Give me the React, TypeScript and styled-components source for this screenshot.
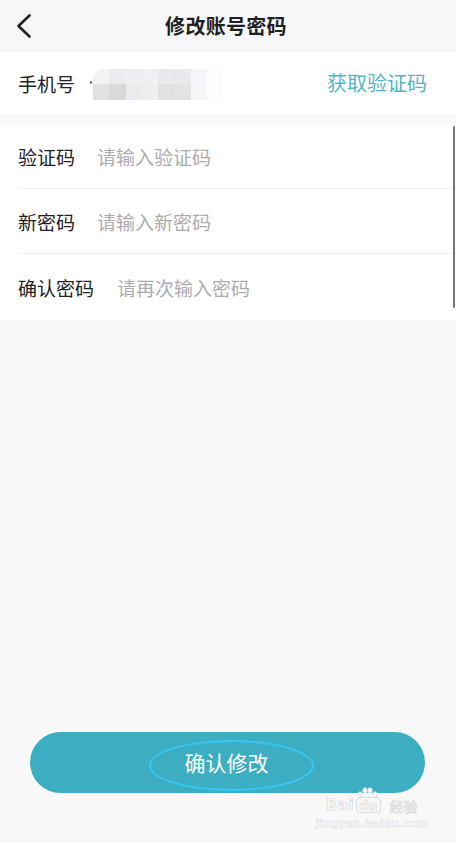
import React from "react";
import styled, { createGlobalStyle } from "styled-components";

const Global = createGlobalStyle`
  html, body { margin: 0; padding: 0; }
  body {
    background: #f8f8f9;
    font-family: "Noto Sans CJK SC", "Noto Sans", sans-serif;
    -webkit-font-smoothing: antialiased;
  }
`;

const Page = styled.div`
  min-height: 100vh;
  display: flex;
  flex-direction: column;
  position: relative;
  background: #f8f8f9;
`;

const Header = styled.header`
  height: 52px;
  display: grid;
  grid-template-columns: 1fr auto 1fr;
  align-items: center;
  background: #f7f7f9;
`;

const BackButton = styled.button`
  justify-self: start;
  border: 0;
  background: none;
  padding: 0 0 0 14px;
  height: 52px;
  display: flex;
  align-items: center;
  cursor: pointer;
`;

const Title = styled.h1`
  margin: 0;
  font-size: 20px;
  font-weight: 700;
  color: #1f1f24;
  letter-spacing: 0.3px;
  line-height: 1;
  transform: translateX(-2px);
`;

const PhoneRow = styled.div`
  height: 62px;
  background: #fff;
  display: flex;
  align-items: center;
  padding: 0 30px 0 18px;
`;

const Label = styled.span<{ $w?: number }>`
  font-size: 19px;
  color: #222228;
  width: ${(p) => p.$w ?? 79}px;
  flex-shrink: 0;
  line-height: 1;
`;

const Mosaic = styled.div`
  display: grid;
  grid-template-columns: repeat(8, 16.25px);
  grid-template-rows: 15px 16px;
  filter: blur(0.7px);
  margin-left: -4px;
  margin-top: 2px;
  position: relative;
`;

const Tick = styled.span`
  position: absolute;
  left: -3px;
  top: 12px;
  width: 2px;
  height: 3px;
  background: #666;
  border-radius: 1px;
`;

const Cell = styled.div<{ $c: string; $round?: boolean }>`
  background: ${(p) => p.$c};
  border-top-left-radius: ${(p) => (p.$round ? "11px" : "0")};
`;

const GetCode = styled.button`
  margin-left: auto;
  border: 0;
  background: none;
  padding: 0;
  font-family: inherit;
  font-size: 20px;
  color: #52b5c7;
  line-height: 1;
  cursor: pointer;
  transform: translateX(1px);
`;

const Gap = styled.div`
  height: 10px;
`;

const Card = styled.div`
  background: #fff;
  position: relative;
  padding-left: 18px;
`;

const Row = styled.div<{ $last?: boolean }>`
  height: ${(p) => (p.$last ? 66 : 65)}px;
  display: flex;
  align-items: center;
  border-bottom: ${(p) => (p.$last ? "none" : "1px solid #f1f1f3")};
  box-sizing: border-box;
`;

const Input = styled.input`
  border: 0;
  outline: none;
  background: transparent;
  font-family: inherit;
  font-size: 19px;
  color: #222;
  padding: 0;
  flex: 1;
  &::placeholder {
    color: #acacb0;
  }
`;

const Scrollbar = styled.div`
  position: absolute;
  right: 1px;
  top: 2px;
  bottom: 12px;
  width: 2px;
  border-radius: 1px;
  background: #76767a;
`;

const Filler = styled.div`
  flex: 1;
`;

const Footer = styled.div`
  padding: 0 31px 50px 30px;
`;

const SubmitButton = styled.button`
  width: 100%;
  height: 61px;
  border: 0;
  border-radius: 31px;
  background: #3daec2;
  color: #fff;
  font-family: inherit;
  font-size: 21px;
  display: flex;
  align-items: center;
  justify-content: center;
  position: relative;
  cursor: pointer;
  padding: 0;
`;

const Ring = styled.span`
  position: absolute;
  left: 119px;
  top: 8px;
  width: 165px;
  height: 51px;
  border: 2.5px solid #35c6f6;
  border-radius: 50%;
  box-sizing: border-box;
`;

const ButtonText = styled.span`
  position: relative;
  transform: translateX(-1px);
  line-height: 1;
`;

const Watermark = styled.div`
  position: absolute;
  right: 28px;
  bottom: 14px;
  display: flex;
  flex-direction: column;
  align-items: center;
  pointer-events: none;
`;

const MarkTop = styled.div`
  display: flex;
  align-items: flex-end;
  line-height: 1;
  position: relative;
`;

const MarkLatin = styled.span`
  font-family: "DejaVu Sans", sans-serif;
  font-weight: 700;
  font-size: 15px;
  color: #fbfbfb;
  -webkit-text-stroke: 0.7px #d9d9d9;
  letter-spacing: 0.5px;
`;

const DuBox = styled.span`
  font-family: "DejaVu Sans", sans-serif;
  font-weight: 700;
  font-size: 13px;
  color: #fbfbfb;
  -webkit-text-stroke: 0.7px #d9d9d9;
  border: 1px solid #dcdcdc;
  border-radius: 5px 5px 3px 3px;
  padding: 1px 2px 0;
  margin-left: 2px;
  position: relative;
`;

const MarkCn = styled.span`
  font-family: "Noto Sans CJK SC", sans-serif;
  font-size: 14px;
  color: #fbfbfb;
  -webkit-text-stroke: 0.6px #d6d6d6;
  margin-left: 9px;
`;

const Paw = styled.svg`
  position: absolute;
  left: -1px;
  top: -11px;
`;

const MarkUrl = styled.div`
  font-family: "DejaVu Sans", sans-serif;
  font-size: 10.5px;
  font-weight: 700;
  color: #f4f4f4;
  -webkit-text-stroke: 0.4px #dedede;
  margin-top: 4px;
  letter-spacing: 0.2px;
`;

const topCells = ["#f3f3f4", "#ececee", "#eeeef0", "#f0f0f2", "#eaeaec", "#e9e9eb", "#f6f6f8", "#fdfdfd"];
const bottomCells = ["#e2e2e4", "#d9d9dc", "#ebebed", "#eeeef0", "#e1e1e3", "#e3e3e5", "#f6f6f7", "#fdfdfd"];

export default function App() {
  return (
    <Page>
      <Global />
      <Header>
        <BackButton aria-label="返回">
          <svg width="20" height="26" viewBox="0 0 20 26">
            <polyline
              points="15.5,2.5 4.5,13 15.5,23.5"
              fill="none"
              stroke="#222228"
              strokeWidth="2.6"
              strokeLinecap="round"
              strokeLinejoin="round"
            />
          </svg>
        </BackButton>
        <Title>修改账号密码</Title>
        <span />
      </Header>

      <PhoneRow>
        <Label>手机号</Label>
        <Mosaic>
          <Tick />
          {topCells.map((c, i) => (
            <Cell key={"t" + i} $c={c} $round={i === 0} />
          ))}
          {bottomCells.map((c, i) => (
            <Cell key={"b" + i} $c={c} />
          ))}
        </Mosaic>
        <GetCode>获取验证码</GetCode>
      </PhoneRow>

      <Gap />

      <Card>
        <Row>
          <Label>验证码</Label>
          <Input placeholder="请输入验证码" />
        </Row>
        <Row>
          <Label>新密码</Label>
          <Input placeholder="请输入新密码" type="password" />
        </Row>
        <Row $last>
          <Label $w={99}>确认密码</Label>
          <Input placeholder="请再次输入密码" type="password" />
        </Row>
        <Scrollbar />
      </Card>

      <Filler />

      <Footer>
        <SubmitButton>
          <Ring />
          <ButtonText>确认修改</ButtonText>
        </SubmitButton>
      </Footer>

      <Watermark>
        <MarkTop>
          <MarkLatin>Bai</MarkLatin>
          <DuBox>
            <Paw width="22" height="12" viewBox="0 0 22 12">
              <g fill="#fbfbfb" stroke="#d9d9d9" strokeWidth="0.8">
                <ellipse cx="4" cy="7.5" rx="2.2" ry="2.8" />
                <ellipse cx="9" cy="3.5" rx="2.2" ry="2.8" />
                <ellipse cx="14" cy="3.5" rx="2.2" ry="2.8" />
                <ellipse cx="19" cy="7.5" rx="2.2" ry="2.8" />
              </g>
            </Paw>
            du
          </DuBox>
          <MarkCn>经验</MarkCn>
        </MarkTop>
        <MarkUrl>jingyan.baidu.com</MarkUrl>
      </Watermark>
    </Page>
  );
}
